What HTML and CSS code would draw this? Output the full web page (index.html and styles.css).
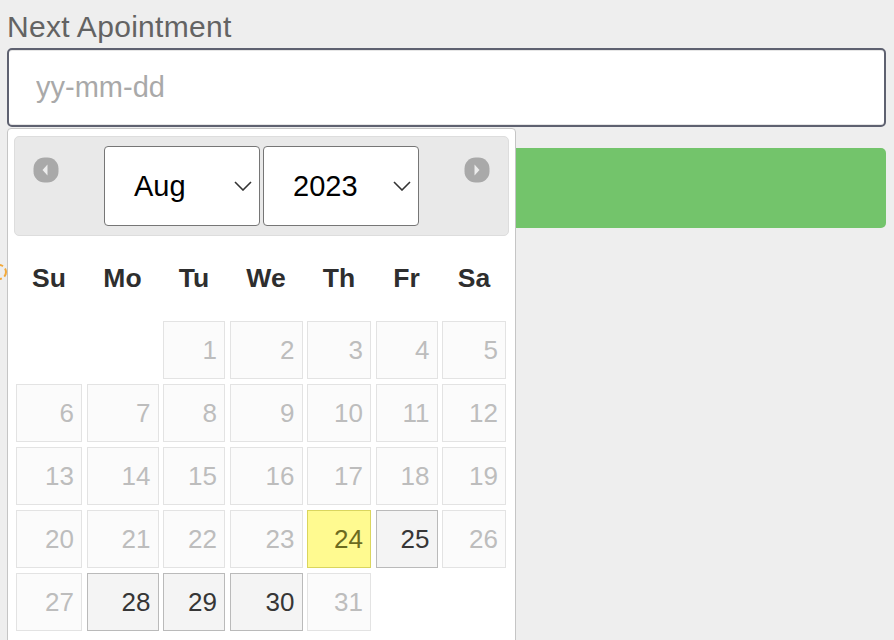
FILE: index.html
```html
<!DOCTYPE html>
<html lang="en">
<head>
    <meta charset="UTF-8">
    <meta name="viewport" content="width=device-width, initial-scale=1.0">
    <title>Next Appointment</title>
    <link rel="stylesheet" href="styles.css">
</head>
<body>
    <div class="page">
        <label class="field-label" for="nextDate">Next Apointment</label>
        <input id="nextDate" class="date-input" type="text" placeholder="yy-mm-dd" autofocus>
        <button class="save-btn">Save</button>
        <div class="status">
            <svg width="20" height="24" viewBox="0 0 20 24">
                <circle cx="-1" cy="12" r="7" fill="none" stroke="#f2a93b" stroke-width="2" stroke-dasharray="5 3"/>
            </svg>
        </div>
    </div>

    <div class="datepicker">
        <div class="dp-header">
            <a class="dp-nav" title="Prev">
                <svg width="26" height="26" viewBox="0 0 26 26">
                    <rect x="0.5" y="0.5" width="25" height="25" rx="11" fill="#a9a9a9"/>
                    <polygon points="14.5,7.5 14.5,18.5 9.5,13" fill="#ececec"/>
                </svg>
            </a>
            <div class="dp-title">
                <div class="dp-select">Aug
                    <svg width="18" height="10" viewBox="0 0 18 10"><polyline points="1,1 9,9 17,1" fill="none" stroke="#333" stroke-width="1.6"/></svg>
                </div>
                <div class="dp-select">2023
                    <svg width="18" height="10" viewBox="0 0 18 10"><polyline points="1,1 9,9 17,1" fill="none" stroke="#333" stroke-width="1.6"/></svg>
                </div>
            </div>
            <a class="dp-nav" title="Next">
                <svg width="26" height="26" viewBox="0 0 26 26">
                    <rect x="0.5" y="0.5" width="25" height="25" rx="11" fill="#a9a9a9"/>
                    <polygon points="10.5,7.5 10.5,18.5 15.5,13" fill="#ececec"/>
                </svg>
            </a>
        </div>

        <div class="dp-grid">
            <div class="dp-dow">Su</div>
            <div class="dp-dow">Mo</div>
            <div class="dp-dow">Tu</div>
            <div class="dp-dow">We</div>
            <div class="dp-dow">Th</div>
            <div class="dp-dow">Fr</div>
            <div class="dp-dow">Sa</div>

            <div></div>
            <div></div>
            <div class="dp-day off">1</div>
            <div class="dp-day off">2</div>
            <div class="dp-day off">3</div>
            <div class="dp-day off">4</div>
            <div class="dp-day off">5</div>

            <div class="dp-day off">6</div>
            <div class="dp-day off">7</div>
            <div class="dp-day off">8</div>
            <div class="dp-day off">9</div>
            <div class="dp-day off">10</div>
            <div class="dp-day off">11</div>
            <div class="dp-day off">12</div>

            <div class="dp-day off">13</div>
            <div class="dp-day off">14</div>
            <div class="dp-day off">15</div>
            <div class="dp-day off">16</div>
            <div class="dp-day off">17</div>
            <div class="dp-day off">18</div>
            <div class="dp-day off">19</div>

            <div class="dp-day off">20</div>
            <div class="dp-day off">21</div>
            <div class="dp-day off">22</div>
            <div class="dp-day off">23</div>
            <div class="dp-day today">24</div>
            <div class="dp-day open">25</div>
            <div class="dp-day off">26</div>

            <div class="dp-day off">27</div>
            <div class="dp-day open">28</div>
            <div class="dp-day open">29</div>
            <div class="dp-day open">30</div>
            <div class="dp-day off">31</div>
            <div></div>
            <div></div>
        </div>
    </div>
</body>
</html>
```

FILE: styles.css
```css
html, body {
    margin: 0;
    height: 100%;
    overflow: hidden;
}

body {
    position: relative;
    background-color: #eeeeee;
    font-family: "Liberation Sans", Arial, sans-serif;
}

.page {
    padding: 10px 8px 0 7px;
}

.field-label {
    display: block;
    font-size: 30px;
    line-height: 33px;
    letter-spacing: 0.3px;
    color: #636363;
    margin-bottom: 5px;
}

.date-input {
    display: block;
    box-sizing: border-box;
    width: 100%;
    height: 79px;
    margin: 0;
    padding: 0 0 0 27px;
    border: 2px solid #5e6170;
    border-radius: 5px;
    box-shadow: inset 0 1px 0 #e6e6e6, inset 0 -1px 0 #e6e6e6;
    background-color: white;
    font-family: inherit;
    font-size: 29px;
    color: #333;
    outline: none;
}

.date-input::placeholder {
    color: #a9a9a9;
}

.save-btn {
    display: block;
    width: 100%;
    height: 80px;
    margin-top: 21px;
    border: none;
    border-radius: 5px;
    background-color: #73c46b;
    color: white;
    font-family: inherit;
    font-size: 29px;
}

.status {
    margin: 32px 0 0 -7px;
    height: 24px;
}

/* datepicker popup */
.datepicker {
    position: absolute;
    left: 7px;
    top: 128px;
    width: 509px;
    box-sizing: border-box;
    padding: 7px 6px 20px;
    border: 1px solid #c5c5c5;
    border-radius: 4px;
    background-color: white;
}

.dp-header {
    display: flex;
    justify-content: space-between;
    align-items: flex-start;
    box-sizing: border-box;
    height: 100px;
    padding: 9px 18px 0;
    border: 1px solid #dddddd;
    border-radius: 5px;
    background-color: #e9e9e9;
}

.dp-nav {
    width: 26px;
    height: 26px;
    margin-top: 11px;
    cursor: pointer;
}

.dp-nav svg {
    display: block;
    filter: blur(0.5px);
}

.dp-title {
    display: flex;
    gap: 3px;
}

.dp-select {
    display: flex;
    align-items: center;
    justify-content: space-between;
    box-sizing: border-box;
    width: 156px;
    height: 80px;
    padding: 0 7px 0 29px;
    border: 1px solid #767676;
    border-radius: 4px;
    background-color: white;
    font-size: 29px;
    color: black;
}

.dp-grid {
    display: grid;
    grid-template-columns: 66px 72px 62px 73px 64px 62px 64px;
    grid-template-rows: 76px;
    grid-auto-rows: 58px;
    column-gap: 4.5px;
    row-gap: 5px;
    margin: 4px 2px 0;
}

.dp-dow {
    display: flex;
    align-items: center;
    justify-content: center;
    font-size: 26.5px;
    font-weight: bold;
    color: #2e2e2e;
}

.dp-day {
    display: flex;
    align-items: center;
    justify-content: flex-end;
    box-sizing: border-box;
    padding-right: 7px;
    border: 1px solid;
    font-size: 26px;
}

.dp-day.off {
    border-color: #e3e3e3;
    background-color: #fbfbfb;
    color: #bdbdbd;
}

.dp-day.open {
    border-color: #bababa;
    background-color: #f4f4f4;
    color: #363636;
}

.dp-day.today {
    border-color: #dad55e;
    background-color: #fffa90;
    color: #6c6b1f;
}
```
